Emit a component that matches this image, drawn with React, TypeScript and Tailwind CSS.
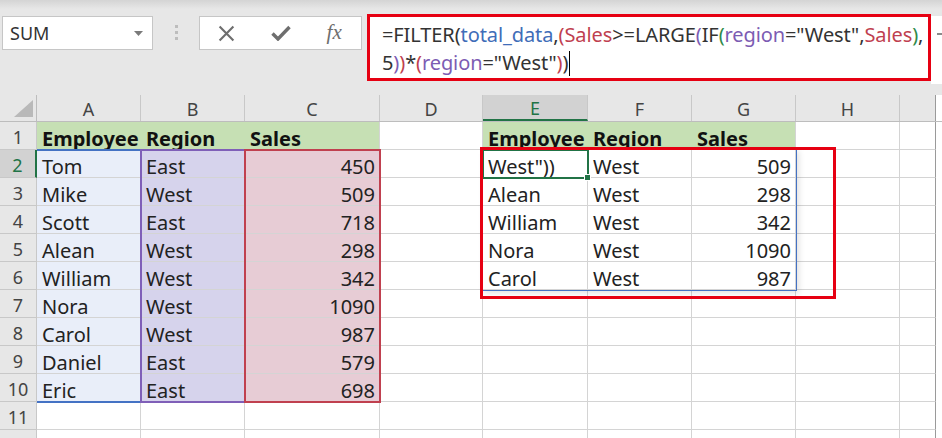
import React from 'react';

const COLS = [104, 104, 135, 103, 105, 104, 104, 104];
const LETTERS = ['A', 'B', 'C', 'D', 'E', 'F', 'G', 'H'];

const DATA: string[][] = [
  ['Employee', 'Region', 'Sales', '', 'Employee', 'Region', 'Sales', ''],
  ['Tom', 'East', '450', '', 'West"))', 'West', '509', ''],
  ['Mike', 'West', '509', '', 'Alean', 'West', '298', ''],
  ['Scott', 'East', '718', '', 'William', 'West', '342', ''],
  ['Alean', 'West', '298', '', 'Nora', 'West', '1090', ''],
  ['William', 'West', '342', '', 'Carol', 'West', '987', ''],
  ['Nora', 'West', '1090', '', '', '', '', ''],
  ['Carol', 'West', '987', '', '', '', '', ''],
  ['Daniel', 'East', '579', '', '', '', '', ''],
  ['Eric', 'East', '698', '', '', '', '', ''],
  ['', '', '', '', '', '', '', ''],
  ['', '', '', '', '', '', '', ''],
];

function cellBg(r: number, c: number) {
  if (r === 0 && (c <= 2 || (c >= 4 && c <= 6))) return 'bg-[#c6e0b4]';
  if (r >= 1 && r <= 9) {
    if (c === 0) return 'bg-[#e9eef9]';
    if (c === 1) return 'bg-[#d6d3ec]';
    if (c === 2) return 'bg-[#e7ccd5]';
  }
  return 'bg-white';
}

function Toolbar() {
  return (
    <div className="flex h-[95px] items-start bg-[#e7e7e7] bg-[linear-gradient(#d4d4d4,#e7e7e7_9px)] pl-[2px] pt-[14px]">
      <div className="mt-[2px] flex h-[34px] w-[151px] items-center justify-between border border-[#c6c6c6] bg-white pl-[7px] pr-[9px] text-[18px] text-[#333]">
        <span>SUM</span>
        <svg width="9" height="5" viewBox="0 0 9 5">
          <path d="M0 0h9L4.5 5z" fill="#7a7a7a" />
        </svg>
      </div>
      <div className="mt-[11px] flex w-[46px] flex-col items-center gap-[3px]">
        <span className="h-[3px] w-[3px] bg-[#bdbdbd]" />
        <span className="h-[3px] w-[3px] bg-[#bdbdbd]" />
        <span className="h-[3px] w-[3px] bg-[#bdbdbd]" />
      </div>
      <div className="mt-[2px] flex h-[34px] w-[163px] items-center border border-[#c6c6c6] bg-white">
        <div className="flex w-[54px] justify-center">
          <svg width="17" height="17" viewBox="0 0 16 16">
            <path d="M1.5 1.5l13 13M14.5 1.5l-13 13" stroke="#6e6e6e" strokeWidth="2" fill="none" />
          </svg>
        </div>
        <div className="flex w-[54px] justify-center">
          <svg width="20" height="16" viewBox="0 0 20 16">
            <path d="M1.5 8.5l5.5 5.5L18.5 2" stroke="#6e6e6e" strokeWidth="3.4" fill="none" />
          </svg>
        </div>
        <div className="flex w-[54px] justify-center font-['Liberation_Serif',serif] text-[21px] italic text-[#6e6e6e]">
          fx
        </div>
      </div>
      <div className="ml-[5px] h-[67px] w-[564px] border-[3px] border-[#e60012] bg-white pl-[12px] pt-[4px] text-[20px] leading-[28px] tracking-[-0.1px] text-[#333]">
        <div className="whitespace-nowrap">
          =FILTER(<span className="text-[#3f6db8]">total_data</span>,
          <span className="text-[#bf3f50]">(Sales</span>&gt;=LARGE
          <span className="text-[#7c5cb3]">(</span>IF<span className="text-[#2f8a4a]">(</span>
          <span className="text-[#7c5cb3]">region</span>="West",
          <span className="text-[#bf3f50]">Sales</span>
          <span className="text-[#2f8a4a]">)</span>,
        </div>
        <div className="flex items-center whitespace-nowrap">
          <span>
            5<span className="text-[#7c5cb3]">)</span>
            <span className="text-[#bf3f50]">)</span>*<span className="text-[#bf3f50]">(</span>
            <span className="text-[#7c5cb3]">region</span>="West"
            <span className="text-[#bf3f50]">)</span>)
          </span>
          <span className="ml-px h-[25px] w-px bg-black" />
        </div>
      </div>
      <div className="relative mt-[2px] h-[68px] flex-1 bg-white">
        <span className="absolute left-[6px] top-[17px] h-[2px] w-[6px] bg-[#8a8a8a]" />
      </div>
    </div>
  );
}

function HeaderRow() {
  return (
    <div className="flex h-[27px] border-b border-[#bdbdbd] bg-[#e7e7e7]">
      <div className="relative w-[37px] shrink-0 border-r border-[#bdbdbd]">
        <svg className="absolute bottom-[4px] right-[3px]" width="19" height="17" viewBox="0 0 19 17">
          <path d="M19 0v17H0z" fill="#b9b9b9" />
        </svg>
      </div>
      {LETTERS.map((l, i) => (
        <div
          key={l}
          style={{ width: COLS[i] }}
          className={
            i === 4
              ? 'flex shrink-0 items-center justify-center border-r border-b-2 border-r-[#c8c8c8] border-b-[#217346] bg-[#d2d2d2] pt-[2px] text-[18px] text-[#217346]'
              : 'flex shrink-0 items-center justify-center border-r border-[#c8c8c8] pt-[2px] text-[18px] text-[#444]'
          }
        >
          {l}
        </div>
      ))}
      <div className="w-[36px] shrink-0 border-r border-[#9a9a9a]" />
      <div className="flex-1 bg-white" />
    </div>
  );
}

function Row({ r }: { r: number }) {
  const row = DATA[r];
  const active = r === 1;
  return (
    <div className="flex h-[28px] shrink-0">
      <div
        className={
          active
            ? 'flex w-[37px] shrink-0 items-center justify-center border-r-2 border-b border-r-[#217346] border-b-[#c8c8c8] bg-[#d2d2d2] pt-[3px] text-[18px] text-[#217346]'
            : 'flex w-[37px] shrink-0 items-center justify-center border-r border-b border-[#c8c8c8] bg-[#e7e7e7] pt-[3px] text-[18px] text-[#444]'
        }
      >
        {r < 11 ? r + 1 : ''}
      </div>
      {row.map((v, c) => {
        const right = r > 0 && (c === 2 || c === 6);
        const greenJoin = r === 0 && (c === 0 || c === 1 || c === 4 || c === 5);
        return (
          <div
            key={c}
            style={{ width: COLS[c] }}
            className={[
              'shrink-0 whitespace-nowrap border-r border-b border-[#d4d4d4] pt-[3px] text-[20px] leading-[27px]',
              greenJoin ? 'border-r-transparent' : '',
              cellBg(r, c),
              r === 0 ? 'font-bold text-[#111]' : 'text-[#222]',
              right ? 'pr-[4px] text-right' : 'pl-[5px]',
            ].join(' ')}
          >
            {v}
          </div>
        );
      })}
      <div className="w-[36px] shrink-0 border-r border-b border-r-[#9a9a9a] border-b-[#d4d4d4]" />
      <div className="flex-1 bg-white" />
    </div>
  );
}

export default function App() {
  return (
    <div className="relative h-[438px] w-[942px] overflow-hidden bg-white font-['Noto_Sans',sans-serif]">
      <Toolbar />
      <HeaderRow />
      {DATA.map((_, r) => (
        <Row key={r} r={r} />
      ))}

      {/* formula range highlights */}
      <div className="absolute left-[37px] top-[149px] h-[254px] w-[104px] border-y-2 border-[#4472c4]" />
      <div className="absolute left-[140px] top-[149px] h-[254px] w-[106px] border-2 border-[#7f5fb8]" />
      <div className="absolute left-[244px] top-[149px] h-[254px] w-[137px] border-2 border-[#c0404f]" />

      {/* spill range + active cell */}
      <div className="absolute left-[482px] top-[149px] h-[142px] w-[315px] border border-[#4472c4] shadow-[2px_2px_6px_rgba(0,0,0,0.12)]" />
      <div className="absolute left-[482px] top-[149px] h-[30px] w-[107px] border-2 border-[#217346]" />
      <div className="absolute left-[584px] top-[174px] h-[7px] w-[7px] border border-white bg-[#217346]" />

      {/* annotation box */}
      <div className="absolute left-[480px] top-[147px] h-[152px] w-[356px] border-[3px] border-[#e60012]" />
    </div>
  );
}
